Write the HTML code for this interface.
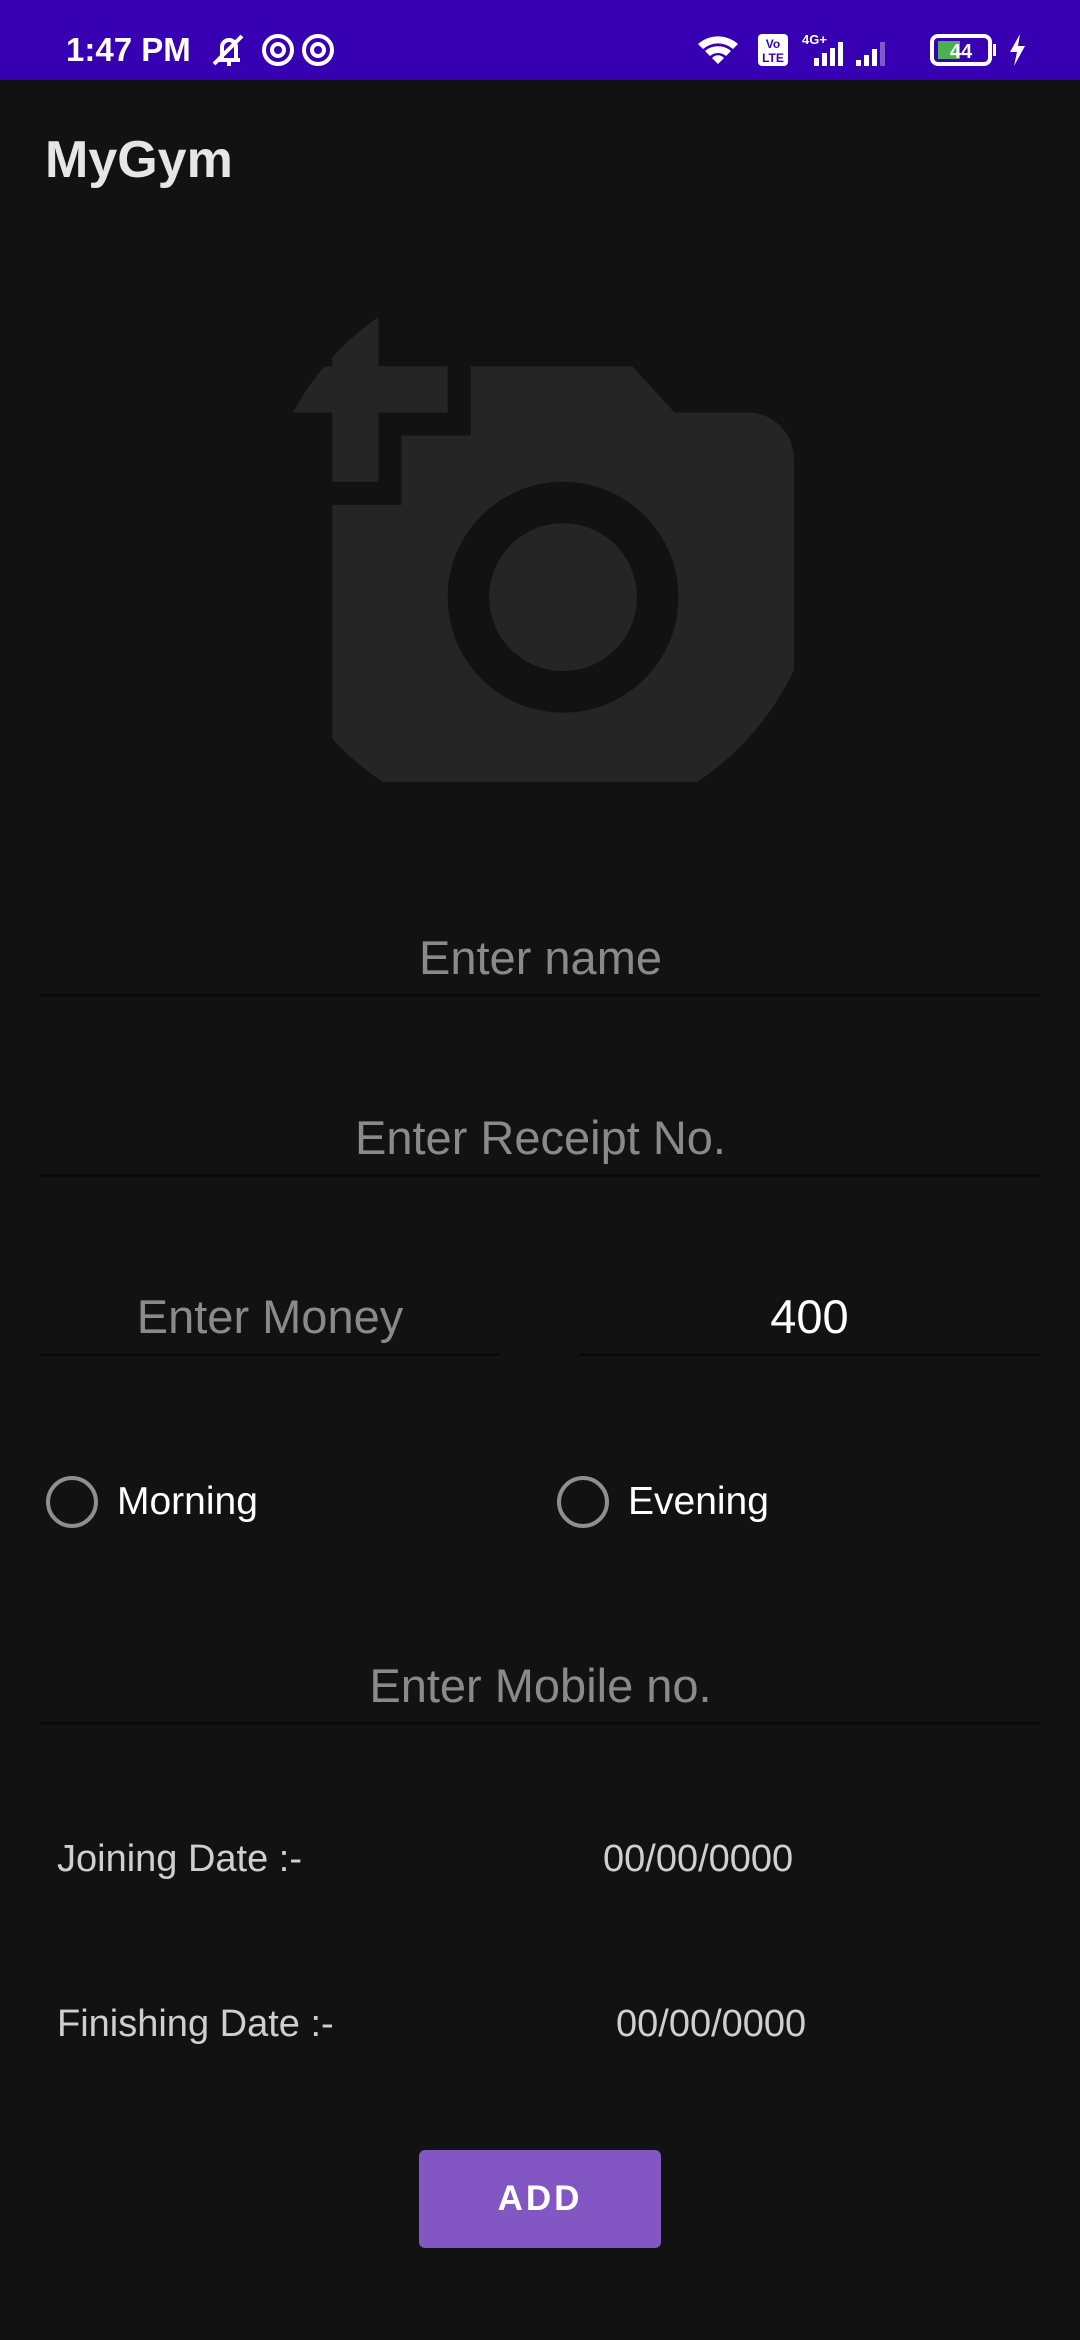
<!DOCTYPE html>
<html><head><meta charset="utf-8"><style>
*{margin:0;padding:0;box-sizing:border-box}
body{width:1080px;height:2340px;background:#121212;position:relative;overflow:hidden;font-family:"Liberation Sans",sans-serif}
.a{position:absolute;white-space:nowrap}
.sb{position:absolute;left:0;top:0;width:1080px;height:80px;background:#3700b3}
.hint{color:#8a8a8a;font-size:47px;text-align:center;line-height:60px}
.ln{position:absolute;height:3px;background:#0a0a0a}
.lbl{color:#cfcfcf;font-size:38px;line-height:44px}
.rad{position:absolute;width:52px;height:52px;border:4px solid #8f8f8f;border-radius:50%}
.rt{color:#fff;font-size:39px;line-height:44px}
</style></head><body>
<div class="sb"></div>
<div class="a" style="left:66px;top:28px;color:#fff;font-size:33px;font-weight:bold;line-height:44px">1:47 PM</div>
<svg class="a" style="left:208px;top:30px" width="130" height="40" viewBox="0 0 130 40" fill="none" stroke="#fff" stroke-width="4">
<path d="M10 30h22M14 30V17a7 7 0 0 1 14 0v13M6 34L34 6M19 34h4"/>
<circle cx="70" cy="20" r="14"/><circle cx="70" cy="20" r="6"/>
<circle cx="110" cy="20" r="14"/><circle cx="110" cy="20" r="6"/>
</svg>
<svg class="a" style="left:694px;top:28px" width="340" height="44" viewBox="0 0 340 44">
<path d="M4 16a30 30 0 0 1 40 0l-5 5a23 23 0 0 0-30 0zM11 23a20 20 0 0 1 26 0l-5 5a12 12 0 0 0-16 0zM18 30a8 8 0 0 1 12 0l-6 6z" fill="#fff"/>
<rect x="64" y="6" width="30" height="32" rx="4" fill="#fff"/>
<text x="79" y="20" font-size="12" font-weight="bold" text-anchor="middle" fill="#3700b3" font-family="Liberation Sans">Vo</text>
<text x="79" y="34" font-size="12" font-weight="bold" text-anchor="middle" fill="#3700b3" font-family="Liberation Sans">LTE</text>
<text x="108" y="16" font-size="13" font-weight="bold" fill="#fff" font-family="Liberation Sans">4G+</text>
<path d="M120 38h5v-8h-5zM128 38h5v-13h-5zM136 38h5v-18h-5zM144 38h5v-24h-5z" fill="#fff"/>
<path d="M162 38h5v-6h-5zM170 38h5v-11h-5zM178 38h5v-17h-5z" fill="#fff"/><path d="M186 38h5v-24h-5z" fill="#7a5ad0"/>
<rect x="238" y="8" width="58" height="28" rx="6" fill="none" stroke="#fff" stroke-width="4"/>
<rect x="244" y="13" width="22" height="18" fill="#4caf50"/>
<text x="267" y="30" font-size="20" font-weight="bold" text-anchor="middle" fill="#fff" font-family="Liberation Sans">44</text>
<rect x="299" y="16" width="3" height="12" fill="#fff"/>
<path d="M326 6l-10 18h7l-3 14 11-20h-7z" fill="#fff"/>
</svg>
<div class="a" style="left:45px;top:130px;color:#e6e6e6;font-size:52px;font-weight:bold;line-height:60px">MyGym</div>

<svg class="a" style="left:0;top:0" width="1080" height="900">
<defs><clipPath id="c"><circle cx="540" cy="548" r="282"/></clipPath></defs>
<g clip-path="url(#c)"><svg x="263" y="274" width="554" height="554" viewBox="0 0 24 24" preserveAspectRatio="none">
<path fill="#252525" fill-rule="evenodd" d="M3 4V1h2v3h3v2H5v3H3V6H0V4h3zm3 6V7h3V4h7l1.83 2H21c1.1 0 2 .9 2 2v12c0 1.1-.9 2-2 2H5c-1.1 0-2-.9-2-2V10h3zm7 9c2.76 0 5-2.240 5-5s-2.24-5-5-5-5 2.24-5 5 2.24 5 5 5zm-3.2-5c0 1.77 1.43 3.2 3.2 3.2s3.2-1.43 3.2-3.2-1.43-3.2-3.2-3.2-3.2 1.43-3.2 3.2z"/>
</svg></g></svg>

<div class="a hint" style="left:40px;width:1001px;top:928px">Enter name</div>
<div class="ln" style="left:40px;width:1001px;top:994px"></div>
<div class="a hint" style="left:40px;width:1001px;top:1108px">Enter Receipt No.</div>
<div class="ln" style="left:40px;width:1001px;top:1174px"></div>
<div class="a hint" style="left:40px;width:460px;top:1287px">Enter Money</div>
<div class="ln" style="left:40px;width:460px;top:1353px"></div>
<div class="a hint" style="left:579px;width:461px;top:1287px;color:#fff">400</div>
<div class="ln" style="left:579px;width:461px;top:1353px"></div>

<div class="rad" style="left:46px;top:1476px"></div>
<div class="a rt" style="left:117px;top:1480px">Morning</div>
<div class="rad" style="left:557px;top:1476px"></div>
<div class="a rt" style="left:628px;top:1480px">Evening</div>

<div class="a hint" style="left:40px;width:1001px;top:1656px">Enter Mobile no.</div>
<div class="ln" style="left:40px;width:1001px;top:1722px"></div>

<div class="a lbl" style="left:57px;top:1837px">Joining Date :-</div>
<div class="a lbl" style="left:603px;top:1837px">00/00/0000</div>
<div class="a lbl" style="left:57px;top:2002px">Finishing Date :-</div>
<div class="a lbl" style="left:616px;top:2002px">00/00/0000</div>

<div class="a" style="left:419px;top:2150px;width:242px;height:98px;background:#8257c4;border-radius:6px;color:#fff;font-size:35px;font-weight:bold;letter-spacing:3px;text-align:center;line-height:98px">ADD</div>
</body></html>
